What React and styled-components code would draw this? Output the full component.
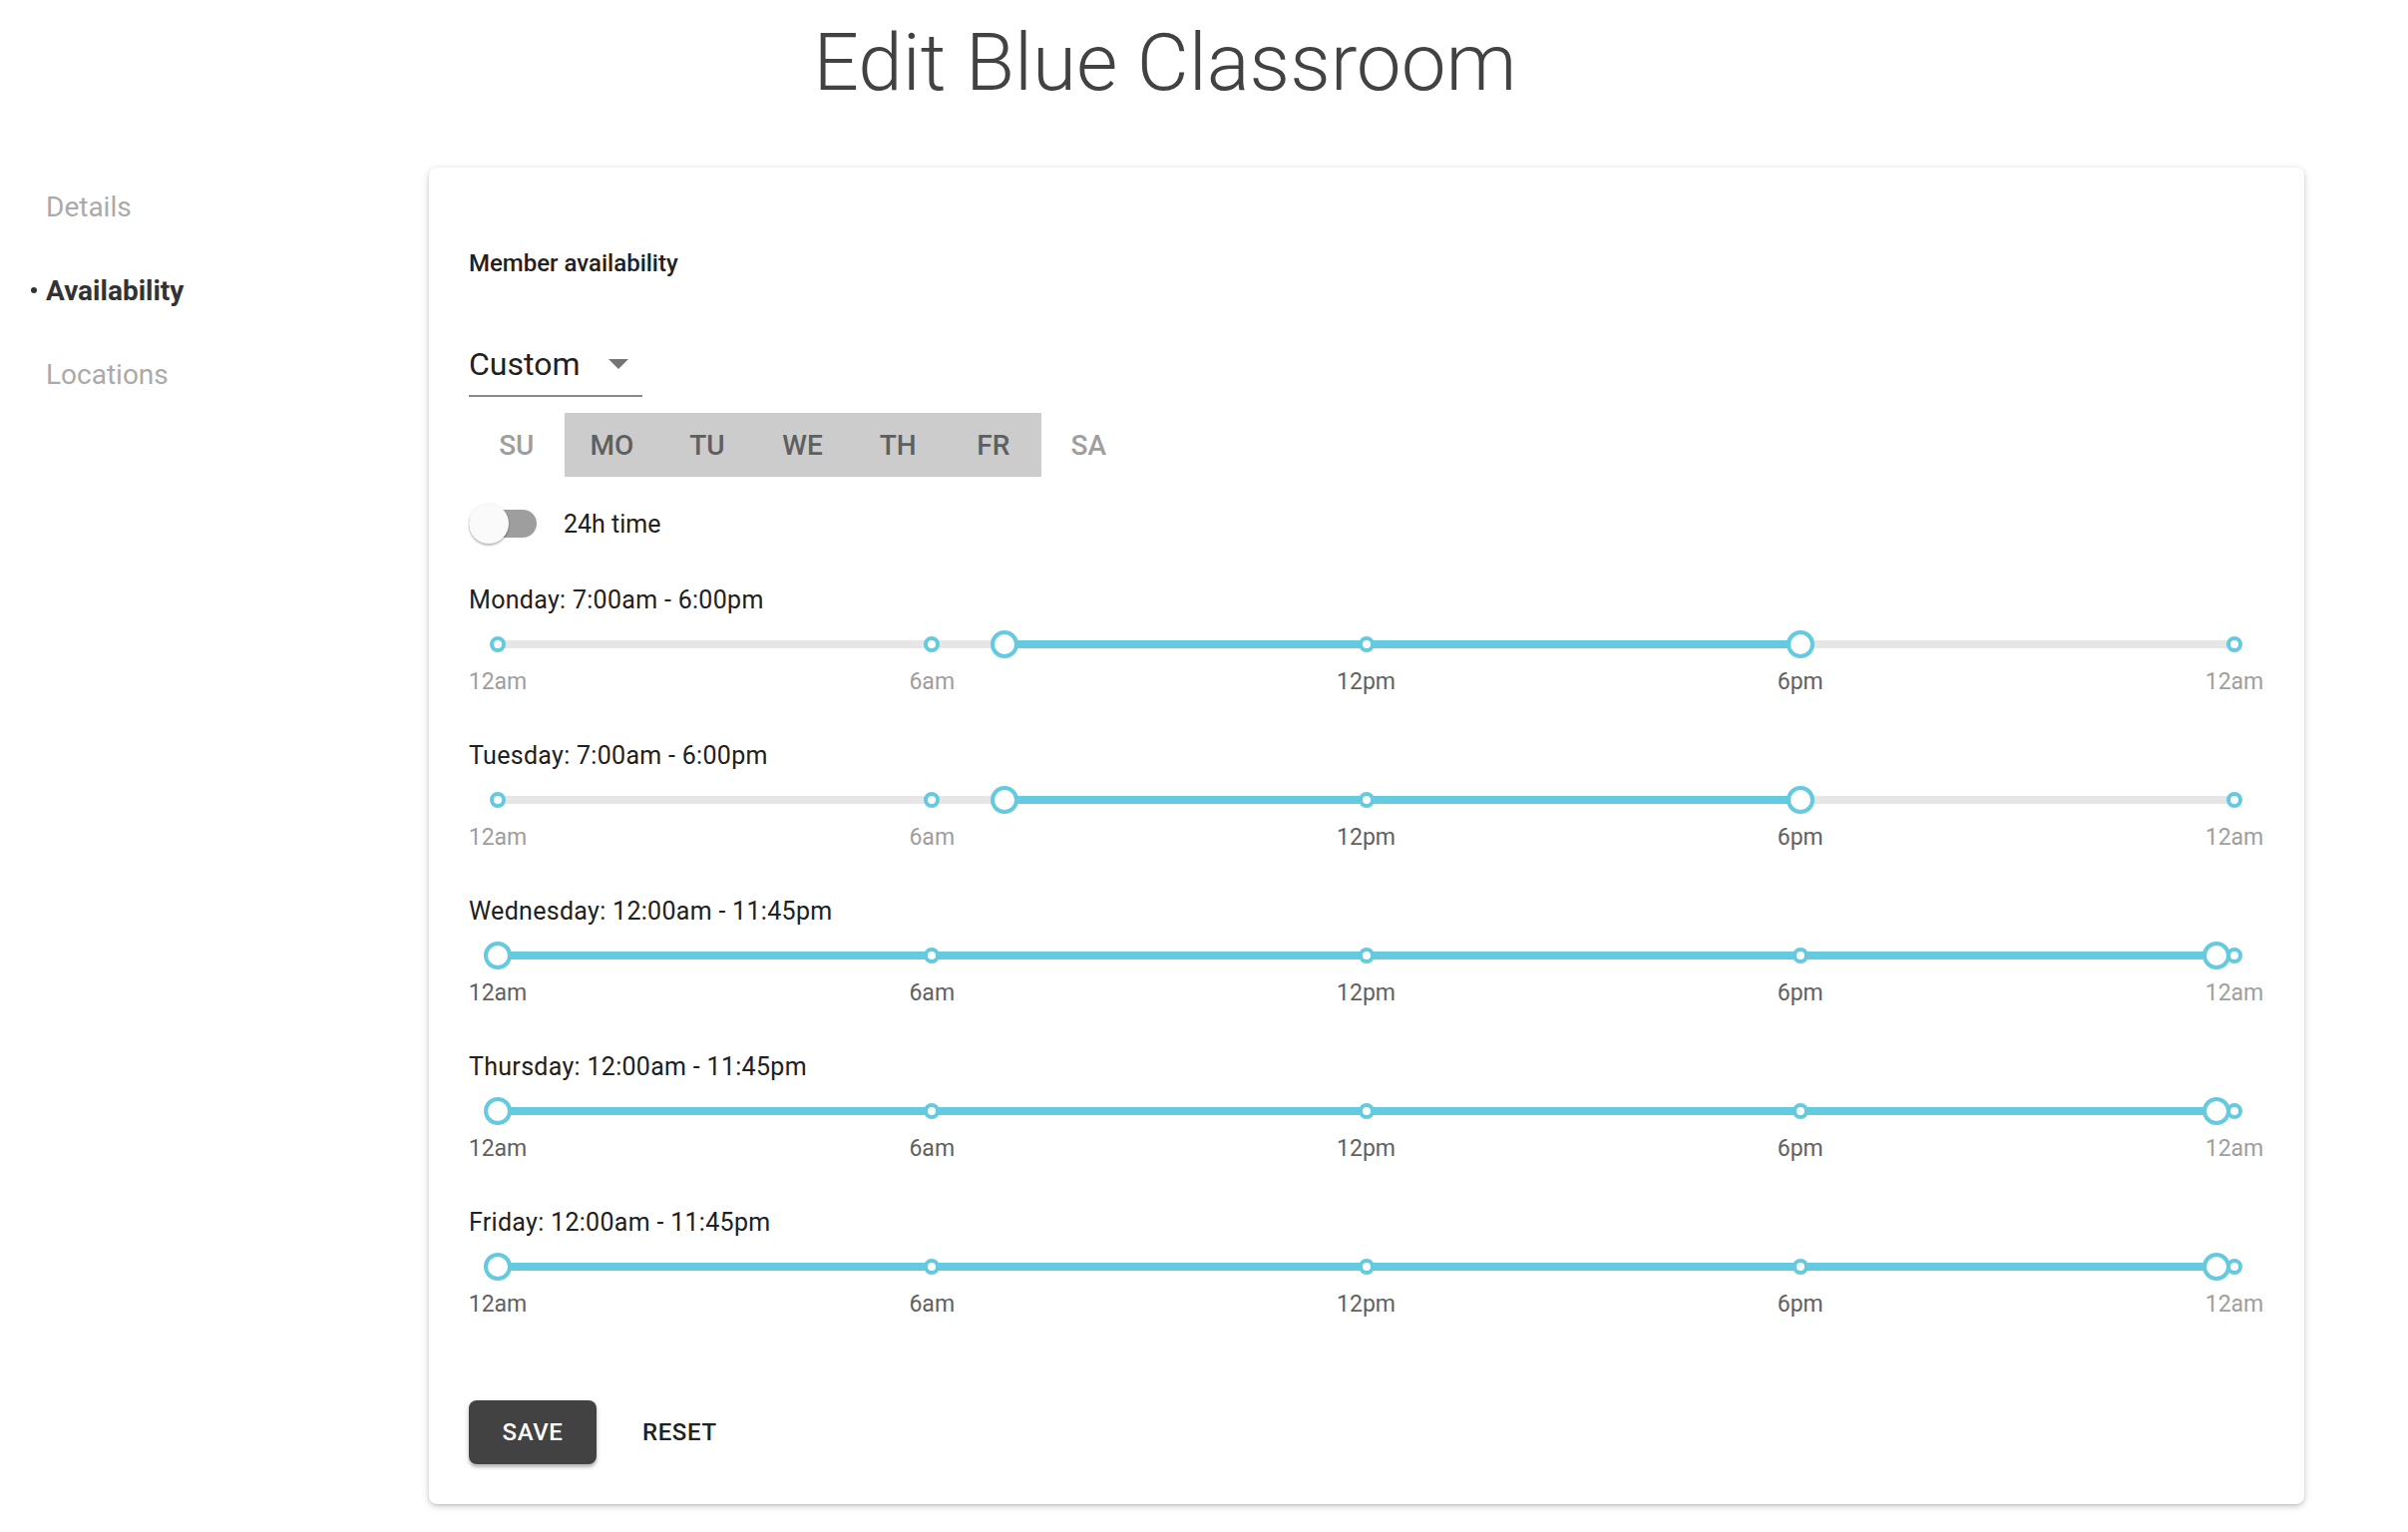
import React from "react"
import styled, { createGlobalStyle } from "styled-components"

const BLUE = "#64cadf"

const GlobalStyle = createGlobalStyle`
  html, body {
    margin: 0;
    padding: 0;
    background: #fff;
    font-family: Roboto, "Liberation Sans", sans-serif;
  }
`

const Page = styled.div`
  width: 2414px;
  min-height: 1536px;
  box-sizing: border-box;
`

const Title = styled.h1`
  width: 2336px;
  margin: 15px 0 0;
  text-align: center;
  font-weight: 300;
  font-size: 80px;
  line-height: 96px;
  color: #424242;
`

const Layout = styled.div`
  display: flex;
  margin-top: 57px;
`

const Sidebar = styled.nav`
  width: 430px;
  flex: none;
  margin-top: -2px;
`

const NavItem = styled.div`
  font-size: 28px;
  line-height: 84px;
  padding-left: ${p => (p.active ? "31px" : "46px")};
  font-weight: ${p => (p.active ? 700 : 400)};
  color: ${p => (p.active ? "#333" : "#aaa")};
`

const Bullet = styled.span`
  display: inline-block;
  width: 6px;
  height: 6px;
  margin-right: 9px;
  border-radius: 50%;
  background: #333;
  vertical-align: 7px;
`

const Card = styled.div`
  width: 1880px;
  box-sizing: border-box;
  padding: 40px;
  border-radius: 8px;
  background: #fff;
  box-shadow: 0 2px 4px rgba(0, 0, 0, 0.14), 0 4px 2px -4px rgba(0, 0, 0, 0.12),
    0 2px 10px rgba(0, 0, 0, 0.12);
`

const Heading = styled.div`
  margin-top: 40px;
  font-size: 24px;
  line-height: 32px;
  font-weight: 500;
  color: #212121;
`

const Select = styled.div`
  margin-top: 65px;
  width: 174px;
  display: flex;
  align-items: center;
  justify-content: space-between;
  padding-bottom: 11px;
  border-bottom: 2px solid #8a8a8a;
  font-size: 32px;
  line-height: 40px;
  color: #212121;
`

const Arrow = styled.span`
  width: 0;
  height: 0;
  margin-right: 14px;
  border-left: 10px solid transparent;
  border-right: 10px solid transparent;
  border-top: 10px solid #757575;
`

const DayRow = styled.div`
  display: flex;
  margin-top: 16px;
`

const Day = styled.div`
  width: 95.6px;
  height: 64px;
  display: flex;
  align-items: center;
  justify-content: center;
  font-size: 28px;
  font-weight: 500;
  background: ${p => (p.on ? "#cccccc" : "transparent")};
  color: ${p => (p.on ? "#5f5f5f" : "#9e9e9e")};
`

const ToggleRow = styled.div`
  display: flex;
  align-items: center;
  margin-top: 27px;
  height: 40px;
`

const Switch = styled.div`
  position: relative;
  width: 68px;
  height: 40px;
  flex: none;
`

const SwitchTrack = styled.div`
  position: absolute;
  left: 0;
  right: 0;
  top: 6px;
  height: 28px;
  border-radius: 14px;
  background: #9e9e9e;
`

const SwitchThumb = styled.div`
  position: absolute;
  left: 0;
  top: 0;
  width: 40px;
  height: 40px;
  border-radius: 50%;
  background: #fafafa;
  box-shadow: 0 2px 2px rgba(0, 0, 0, 0.24), 0 0 2px rgba(0, 0, 0, 0.12);
`

const ToggleLabel = styled.span`
  margin-left: 27px;
  font-size: 25px;
  color: #212121;
`

const Rows = styled.div`
  margin-top: 41px;
  display: flex;
  flex-direction: column;
  gap: 44px;
`

const Row = styled.div``

const RowLabel = styled.div`
  font-size: 25px;
  line-height: 32px;
  letter-spacing: 0.3px;
  color: #212121;
  margin-bottom: 8px;
`

const Slider = styled.div`
  position: relative;
  height: 40px;
  margin: 0 30px 0 29px;
`

const Rail = styled.div`
  position: absolute;
  left: 0;
  right: 0;
  top: 16px;
  height: 8px;
  background: #e6e6e6;
`

const Fill = styled.div`
  position: absolute;
  top: 16px;
  height: 8px;
  background: ${BLUE};
`

const Knob = styled.div`
  position: absolute;
  top: 50%;
  box-sizing: border-box;
  width: ${p => (p.big ? 28 : 16)}px;
  height: ${p => (p.big ? 28 : 16)}px;
  border-radius: 50%;
  border: 4px solid ${BLUE};
  background: #fff;
  transform: translate(-50%, -50%);
`

const Marks = styled.div`
  position: relative;
  height: 28px;
  margin: 4px 30px 0 29px;
`

const Mark = styled.span`
  position: absolute;
  top: 0;
  transform: translateX(-50%);
  font-size: 23px;
  line-height: 28px;
  white-space: nowrap;
  color: ${p => (p.inRange ? "#616161" : "#9e9e9e")};
`

const Actions = styled.div`
  display: flex;
  align-items: center;
  gap: 46px;
  margin-top: 82px;
`

const SaveButton = styled.button`
  width: 128px;
  height: 64px;
  border: none;
  border-radius: 8px;
  background: #424242;
  color: #fff;
  font-family: inherit;
  font-size: 24px;
  font-weight: 500;
  letter-spacing: 0.6px;
  box-shadow: 0 3px 3px rgba(0, 0, 0, 0.2), 0 2px 6px rgba(0, 0, 0, 0.14);
`

const TextButton = styled.button`
  border: none;
  background: none;
  padding: 0;
  color: #212121;
  font-family: inherit;
  font-size: 24px;
  font-weight: 500;
  letter-spacing: 0.6px;
`

const DAYS = [
  ["SU", false],
  ["MO", true],
  ["TU", true],
  ["WE", true],
  ["TH", true],
  ["FR", true],
  ["SA", false],
]

const TICKS = [
  [0, "12am"],
  [6, "6am"],
  [12, "12pm"],
  [18, "6pm"],
  [24, "12am"],
]

const SCHEDULE = [
  { day: "Monday", start: 7, end: 18, text: "7:00am - 6:00pm" },
  { day: "Tuesday", start: 7, end: 18, text: "7:00am - 6:00pm" },
  { day: "Wednesday", start: 0, end: 23.75, text: "12:00am - 11:45pm" },
  { day: "Thursday", start: 0, end: 23.75, text: "12:00am - 11:45pm" },
  { day: "Friday", start: 0, end: 23.75, text: "12:00am - 11:45pm" },
]

const pct = h => (h / 24) * 100 + "%"

const DaySlider = ({ start, end }) => (
  <>
    <Slider>
      <Rail />
      <Fill style={{ left: pct(start), width: pct(end - start) }} />
      {TICKS.map(([h]) => (
        <Knob key={h} style={{ left: pct(h) }} />
      ))}
      <Knob big style={{ left: pct(start) }} />
      <Knob big style={{ left: pct(end) }} />
    </Slider>
    <Marks>
      {TICKS.map(([h, label]) => (
        <Mark key={h} inRange={h >= start && h <= end} style={{ left: pct(h) }}>
          {label}
        </Mark>
      ))}
    </Marks>
  </>
)

const App = () => {
  return (
    <Page>
      <GlobalStyle />
      <Title>Edit Blue Classroom</Title>
      <Layout>
        <Sidebar>
          <NavItem>Details</NavItem>
          <NavItem active>
            <Bullet />
            Availability
          </NavItem>
          <NavItem>Locations</NavItem>
        </Sidebar>
        <Card>
          <Heading>Member availability</Heading>
          <Select>
            Custom
            <Arrow />
          </Select>
          <DayRow>
            {DAYS.map(([d, on]) => (
              <Day key={d} on={on}>
                {d}
              </Day>
            ))}
          </DayRow>
          <ToggleRow>
            <Switch>
              <SwitchTrack />
              <SwitchThumb />
            </Switch>
            <ToggleLabel>24h time</ToggleLabel>
          </ToggleRow>
          <Rows>
            {SCHEDULE.map(s => (
              <Row key={s.day}>
                <RowLabel>
                  {s.day}: {s.text}
                </RowLabel>
                <DaySlider start={s.start} end={s.end} />
              </Row>
            ))}
          </Rows>
          <Actions>
            <SaveButton>SAVE</SaveButton>
            <TextButton>RESET</TextButton>
          </Actions>
        </Card>
      </Layout>
    </Page>
  )
}

export default App
